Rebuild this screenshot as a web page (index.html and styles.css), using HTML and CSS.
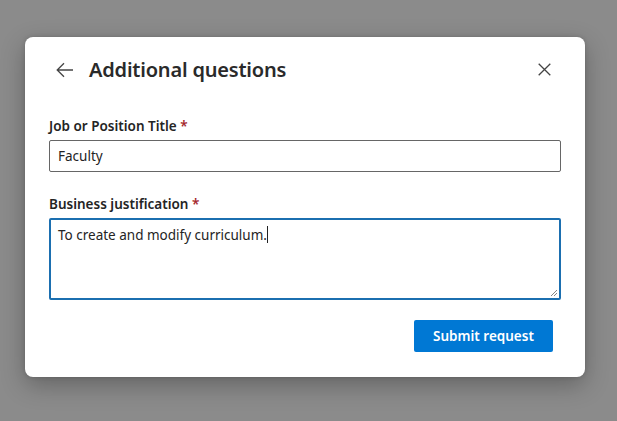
FILE: index.html
```html
<!DOCTYPE html>
<html>
<head>
<meta charset="utf-8">
<link rel="stylesheet" href="styles.css">
</head>
<body>
<div class="dialog">
  <div class="header">
    <span class="back">
      <svg width="18" height="16" viewBox="0 0 18 16"><path d="M17 8H1.5M8 1.2L1.2 8L8 14.8" fill="none" stroke="#444" stroke-width="1.3"/></svg>
    </span>
    <h1 class="title">Additional questions</h1>
    <span class="close">
      <svg width="13" height="13" viewBox="0 0 13 13"><path d="M0.7 0.7L12.3 12.3M12.3 0.7L0.7 12.3" fill="none" stroke="#444" stroke-width="1.3"/></svg>
    </span>
  </div>
  <div class="form">
    <div class="field">
      <label class="label">Job or Position Title <span class="req">*</span></label>
      <div class="input">Faculty</div>
    </div>
    <div class="field">
      <label class="label">Business justification <span class="req">*</span></label>
      <div class="textarea">To create and modify curriculum.<span class="caret"></span>
        <svg class="grip" width="8" height="8" viewBox="0 0 8 8"><path d="M1 7L7 1M4 7L7 4" stroke="#666" stroke-width="0.8"/></svg>
      </div>
    </div>
    <div class="actions">
      <button class="submit">Submit request</button>
    </div>
  </div>
</div>
</body>
</html>
```
FILE: styles.css
```css
html, body {
  margin: 0;
  padding: 0;
}
body {
  background: #8b8b8b;
  width: 617px;
  height: 421px;
  overflow: hidden;
  font-family: "Noto Sans", "Open Sans", sans-serif;
  color: #242424;
}
.dialog {
  position: relative;
  margin: 37px 0 0 25px;
  width: 560px;
  height: 340px;
  background: #fff;
  border-radius: 8px;
  box-shadow: 0 8px 24px rgba(0,0,0,0.28), 0 0 4px rgba(0,0,0,0.15);
  box-sizing: border-box;
}
.header {
  display: flex;
  align-items: center;
  height: 64px;
  padding: 0 34px 0 31px;
  box-sizing: border-box;
  padding-top: 1px;
}
.back {
  display: flex;
  width: 33px;
}
.title {
  flex: 1;
  margin: 0;
  font-size: 20px;
  font-weight: 600;
  letter-spacing: -0.2px;
  color: #2a2a2a;
}
.close {
  display: flex;
}
.form {
  padding: 15px 24px 0 24px;
}
.field {
  display: flex;
  flex-direction: column;
}
.field + .field {
  margin-top: 22px;
}
.label {
  font-size: 13.5px;
  font-weight: 600;
  line-height: 20px;
  margin-bottom: 4px;
  color: #242424;
}
.req {
  color: #a4262c;
}
.input {
  height: 32px;
  border: 1px solid #666;
  border-radius: 2px;
  box-sizing: border-box;
  padding: 0 8px;
  font-size: 13.5px;
  line-height: 30px;
}
.textarea {
  position: relative;
  height: 82px;
  border: 2px solid #1b6fb0;
  border-radius: 2px;
  box-sizing: border-box;
  padding: 5px 7px;
  font-size: 13.5px;
  line-height: 20px;
}
.caret {
  display: inline-block;
  width: 1px;
  height: 17px;
  background: #222;
  vertical-align: -3px;
}
.grip {
  position: absolute;
  right: 1px;
  bottom: 1px;
}
.actions {
  display: flex;
  justify-content: flex-end;
  padding-right: 8px;
  margin-top: 20px;
}
.submit {
  width: 139px;
  height: 32px;
  border: none;
  border-radius: 2px;
  background: #0078d4;
  color: #fff;
  font-family: inherit;
  font-size: 13.5px;
  font-weight: 600;
}
```
